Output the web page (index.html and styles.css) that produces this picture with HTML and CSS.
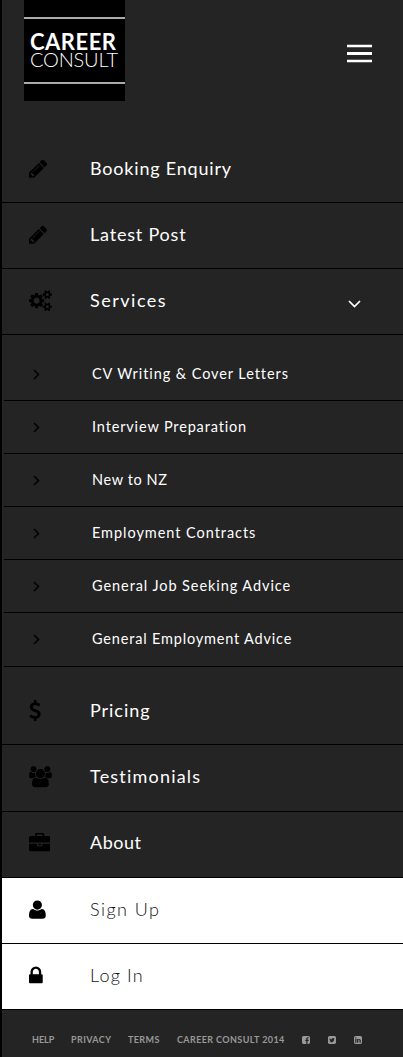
FILE: index.html
```html
<!DOCTYPE html>
<html lang="en">
<head>
<meta charset="utf-8">
<title>Career Consult</title>
<link rel="stylesheet" href="styles.css">
</head>
<body>
<svg class="defs" width="0" height="0">
  <defs>
    <path id="pencil" d="M491 1536l91-91-235-235-91 91v107h128v128h107zm523-928q0-22-22-22-10 0-17 7l-542 542q-7 7-7 17 0 22 22 22 10 0 17-7l542-542q7-7 7-17zm-54-192l416 416-832 832h-416v-416zm683 96q0 53-37 90l-166 166-416-416 166-165q36-38 90-38 53 0 91 38l235 234q37 39 37 91z"/>
    <path id="chevron" d="M1 1l4.5 4.5L1 10" fill="none" stroke="currentColor" stroke-width="1.5"/>
  </defs>
</svg>
<div class="menu">
  <header class="header">
    <div class="logo">
      <div class="logo-box">
        <span class="logo-career">CAREER</span>
        <span class="logo-consult">CONSULT</span>
      </div>
    </div>
    <svg class="burger" viewBox="0 0 25 19" fill="#fff"><path d="M0 .7h25v2.6H0zM0 8.1h25v2.8H0zM0 15.7h25v2.6H0z"/></svg>
  </header>
  <nav>
    <a class="row"><span class="icon"><svg viewBox="128 0 1792 1792"><use href="#pencil"/></svg></span><span class="label booking">Booking Enquiry</span></a>
    <a class="row"><span class="icon"><svg viewBox="128 0 1792 1792"><use href="#pencil"/></svg></span><span class="label latest">Latest Post</span></a>
    <a class="row"><span class="icon"><svg class="wide" viewBox="0 0 1920 1792"><path d="M896 896q0-106-75-181t-181-75-181 75-75 181 75 181 181 75 181-75 75-181zm768 512q0-52-38-90t-90-38-90 38-38 90q0 53 37.500 90.500t90.500 37.500 90.500-37.500 37.500-90.500zm0-1024q0-52-38-90t-90-38-90 38-38 90q0 53 37.500 90.500t90.500 37.500 90.500-37.500 37.500-90.500zm-384 421v185q0 10-7 19.500t-16 10.500l-155 24q-11 35-32 76 34 48 90 115 7 11 7 20 0 12-7 19-23 30-82.500 89.500t-78.500 59.500q-11 0-21-7l-115-90q-37 19-77 31-11 108-23 155-7 24-30 24h-186q-11 0-20-7.500t-10-17.500l-23-153q-34-10-75-31l-118 89q-7 7-20 7-11 0-21-8-144-133-144-160 0-9 7-19 10-14 41-53t47-61q-23-44-35-82l-152-24q-10-1-17-9.500t-7-19.500v-185q0-10 7-19.500t16-10.500l155-24q11-35 32-76-34-48-90-115-7-11-7-20 0-12 7-20 22-30 82-89t79-59q11 0 21 7l115 90q34-18 77-32 11-108 23-154 7-24 30-24h186q11 0 20 7.500t10 17.500l23 153q34 10 75 31l118-89q8-7 20-7 11 0 21 8 144 133 144 160 0 8-7 19-12 16-42 54t-45 60q23 48 34 82l152 23q10 2 17 10.500t7 19.500zm640 533v140q0 16-149 31-12 27-30 52 51 113 51 138 0 4-4 7-122 71-124 71-8 0-46-47t-52-68q-20 2-30 2t-30-2q-14 21-52 68t-46 47q-2 0-124-71-4-3-4-7 0-25 51-138-18-25-30-52-149-15-149-31v-140q0-16 149-31 13-29 30-52-51-113-51-138 0-4 4-7 4-2 35-20t59-34 30-16q8 0 46 46.500t52 67.500q20-2 30-2t30 2q51-71 92-112l6-2q4 0 124 70 4 3 4 7 0 25-51 138 17 23 30 52 149 15 149 31zm0-1024v140q0 16-149 31-12 27-30 52 51 113 51 138 0 4-4 7-122 71-124 71-8 0-46-47t-52-68q-20 2-30 2t-30-2q-14 21-52 68t-46 47q-2 0-124-71-4-3-4-7 0-25 51-138-18-25-30-52-149-15-149-31v-140q0-16 149-31 13-29 30-52-51-113-51-138 0-4 4-7 4-2 35-20t59-34 30-16q8 0 46 46.500t52 67.500q20-2 30-2t30 2q51-71 92-112l6-2q4 0 124 70 4 3 4 7 0 25-51 138 17 23 30 52 149 15 149 31z"/></svg></span><span class="label services">Services</span><svg class="caret" viewBox="0 0 13 8"><path d="M1 1l5.500 5.500L12 1" fill="none" stroke="#fff" stroke-width="1.7"/></svg></a>
    <div class="submenu">
      <a class="sub"><svg class="chev" viewBox="0 0 7 11"><use href="#chevron"/></svg><span class="cv">CV Writing &amp; Cover Letters</span></a>
      <a class="sub"><svg class="chev" viewBox="0 0 7 11"><use href="#chevron"/></svg><span class="interview">Interview Preparation</span></a>
      <a class="sub"><svg class="chev" viewBox="0 0 7 11"><use href="#chevron"/></svg><span class="new">New to NZ</span></a>
      <a class="sub"><svg class="chev" viewBox="0 0 7 11"><use href="#chevron"/></svg><span class="contracts">Employment Contracts</span></a>
      <a class="sub"><svg class="chev" viewBox="0 0 7 11"><use href="#chevron"/></svg><span class="seeking">General Job Seeking Advice</span></a>
      <a class="sub last"><svg class="chev" viewBox="0 0 7 11"><use href="#chevron"/></svg><span class="employment">General Employment Advice</span></a>
    </div>
    <a class="row after-sub"><span class="icon"><svg viewBox="384 0 1792 1792"><path d="M1362 1185q0 153-99.500 263.500t-258.500 136.500v175q0 14-9 23t-23 9h-135q-13 0-22.500-9.500t-9.500-22.500v-175q-66-9-127.500-31t-101.500-44.500-74-48-46.500-37.500-17.500-18q-17-21-2-41l103-135q7-10 23-12 15-2 24 9l2 2q113 99 243 125 37 8 74 8 81 0 142.500-43t61.500-122q0-28-15-53t-33.500-42-58.500-37.500-66-32-80-32.500q-39-16-61.500-25t-61.500-26.500-62.500-31-56.500-35.500-53.500-42.500-43.500-49-35.500-58-21-66.500-8.500-78q0-138 98-242t255-134v-180q0-13 9.500-22.500t22.500-9.500h135q14 0 23 9t9 23v176q57 6 110.500 23t87 33.500 63.500 37.500 39 29 15 14q17 18 5 38l-81 146q-8 15-23 16-14 3-27-7-3-3-14.500-12t-39-26.500-58.500-32-74.500-26-85.500-11.500q-95 0-155 43t-60 111q0 26 8.500 48t29.500 41.500 39.500 33 56 31 60.500 27 70 27.500q53 20 81 31.500t76 35 75.500 42.500 62 50 53 63.500 31.500 76.500 13 94z"/></svg></span><span class="label pricing">Pricing</span></a>
    <a class="row tall"><span class="icon"><svg class="wide" viewBox="0 0 1920 1792"><path d="M593 896q-162 5-265 128h-134q-82 0-138-40.500t-56-118.500q0-353 124-353 6 0 43.500 21t97.500 42.500 119 21.500q67 0 133-23-5 37-5 66 0 139 81 256zm1071 637q0 120-73 189.500t-194 69.500h-874q-121 0-194-69.500t-73-189.500q0-53 3.500-103.500t14-109 26.500-108.500 43-97.500 62-81 85.500-53.500 111.500-20q10 0 43 21.500t73 48 107 48 135 21.500 135-21.500 107-48 73-48 43-21.500q61 0 111.500 20t85.500 53.500 62 81 43 97.500 26.500 108.500 14 109 3.500 103.500zm-1024-1277q0 106-75 181t-181 75-181-75-75-181 75-181 181-75 181 75 75 181zm704 384q0 159-112.500 271.500t-271.500 112.500-271.500-112.500-112.500-271.500 112.500-271.500 271.500-112.500 271.500 112.500 112.500 271.500zm576 225q0 78-56 118.500t-138 40.500h-134q-103-123-265-128 81-117 81-256 0-29-5-66 66 23 133 23 59 0 119-21.500t97.500-42.500 43.500-21q124 0 124 353zm-128-609q0 106-75 181t-181 75-181-75-75-181 75-181 181-75 181 75 75 181z"/></svg></span><span class="label testimonials">Testimonials</span></a>
    <a class="row"><span class="icon"><svg viewBox="0 0 1792 1792"><path d="M640 256h512v-128h-512v128zm1152 640v480q0 66-47 113t-113 47h-1472q-66 0-113-47t-47-113v-480h672v160q0 26 19 45t45 19h320q26 0 45-19t19-45v-160h672zm-768 0v128h-256v-128h256zm768-480v384h-1792v-384q0-66 47-113t113-47h352v-160q0-40 28-68t68-28h576q40 0 68 28t28 68v160h352q66 0 113 47t47 113z"/></svg></span><span class="label about">About</span></a>
    <a class="row light"><span class="icon"><svg viewBox="192 0 1792 1792"><path d="M1600 1405q0 120-73 189.500t-194 69.500h-874q-121 0-194-69.500t-73-189.500q0-53 3.500-103.500t14-109 26.500-108.500 43-97.500 62-81 85.500-53.500 111.500-20q9 0 42 21.500t74.500 48 108 48 133.500 21.500 133.500-21.500 108-48 74.500-48 42-21.500q61 0 111.500 20t85.500 53.500 62 81 43 97.500 26.500 108.500 14 109 3.500 103.500zm-320-893q0 159-112.500 271.500t-271.500 112.500-271.500-112.500-112.500-271.500 112.500-271.500 271.500-112.500 271.500 112.500 112.500 271.500z"/></svg></span><span class="label signup">Sign Up</span></a>
    <a class="row light"><span class="icon"><svg viewBox="320 0 1792 1792"><path d="M640 768h512v-192q0-106-75-181t-181-75-181 75-75 181v192zm832 96v576q0 40-28 68t-68 28h-960q-40 0-68-28t-28-68v-576q0-40 28-68t68-28h32v-192q0-184 132-316t316-132 316 132 132 316v192h32q40 0 68 28t28 68z"/></svg></span><span class="label login">Log In</span></a>
  </nav>
  <footer class="footer">
    <a class="help">HELP</a><a class="privacy">PRIVACY</a><a class="terms">TERMS</a><a class="copy">CAREER CONSULT 2014</a>
    <svg viewBox="128 128 1536 1536"><path d="M1376 128q119 0 203.500 84.500t84.500 203.500v960q0 119-84.500 203.500t-203.500 84.500h-188v-595h199l30-232h-229v-148q0-56 23.500-84t91.500-28l122-1v-207q-63-9-178-9-136 0-217.500 80t-81.500 226v171h-200v232h200v595h-532q-119 0-203.500-84.500t-84.500-203.500v-960q0-119 84.500-203.500t203.500-84.500h960z"/></svg>
    <svg viewBox="128 128 1536 1536"><path d="M1408 610q-56 25-121 34 68-40 93-117-65 38-134 51-61-66-153-66-87 0-148.500 61.500t-61.500 148.500q0 29 5 48-129-7-242-65t-192-155q-29 50-29 106 0 114 91 175-47-1-100-26v2q0 75 50 133.500t123 72.500q-29 8-51 8-13 0-39-4 21 63 74.500 104t121.500 42q-116 90-261 90-26 0-50-3 148 94 322 94 112 0 210-35.500t168-95 120.500-137 75-162 24.500-168.500q0-18-1-27 63-45 105-109zm256-194v960q0 119-84.500 203.500t-203.500 84.500h-960q-119 0-203.500-84.500t-84.500-203.500v-960q0-119 84.500-203.500t203.500-84.500h960q119 0 203.500 84.500t84.500 203.500z"/></svg>
    <svg viewBox="128 128 1536 1536"><path d="M365 1414h231v-694h-231v694zm246-908q-1-52-36-86t-93-34-94.500 34-36.500 86q0 51 35.500 85.500t92.500 34.500h1q59 0 95-34.500t36-85.500zm585 908h231v-398q0-154-73-233t-193-79q-136 0-209 117h2v-101h-231q3 66 0 694h231v-388q0-38 7-56 15-35 45-59.500t74-24.500q116 0 116 157v371zm468-998v960q0 119-84.500 203.500t-203.500 84.500h-960q-119 0-203.500-84.500t-84.500-203.500v-960q0-119 84.500-203.500t203.500-84.500h960q119 0 203.500 84.500t84.500 203.500z"/></svg>
  </footer>
</div>
</body>
</html>
```

FILE: styles.css
```css
* { box-sizing: border-box; }
body { margin: 0; background: #242424; font-family: Lato, "Open Sans", sans-serif; }
.defs { display: none; }
.menu { width: 403px; height: 1057px; border-left: 2px solid #000; background: #242424; overflow: hidden; }
.header { height: 137px; padding: 0 31px 0 22px; display: flex; justify-content: space-between; align-items: flex-start; }
.logo { width: 101px; height: 101px; background: #000; color: #fff; padding-top: 17px; }
.logo-box { height: 67px; border-top: 2px solid #aaa; border-bottom: 2px solid #aaa; padding: 13px 0 0 6px; display: flex; flex-direction: column; white-space: nowrap; }
.logo-career { font-size: 22px; line-height: 19px; font-weight: 700; letter-spacing: .5px; }
.logo-consult { font-size: 20px; line-height: 17px; font-weight: 300; letter-spacing: -.2px; }
.burger { width: 25px; height: 19px; margin-top: 44px; }

.row { height: 66px; display: flex; align-items: center; border-bottom: 1px solid #000; padding: 0 42px 0 27px; color: #fff; }
.icon { width: 61px; height: 21.330px; margin-bottom: 2px; color: #000; }
.icon svg { display: block; width: 21.330px; height: 21.330px; fill: #000; }
.icon .wide { width: 22.860px; }
.label { font-size: 18px; line-height: 24px; margin-bottom: 4px; letter-spacing: .8px; white-space: nowrap; }
.services { letter-spacing: 1.500px; }
.pricing { letter-spacing: .950px; }
.testimonials { letter-spacing: 1.200px; }
.about { letter-spacing: .500px; margin-bottom: 5px; }
.signup { letter-spacing: 1.450px; }
.login { letter-spacing: 1.200px; }
.caret { width: 13px; height: 8px; margin: 5px 0 0 auto; }
.after-sub { height: 78px; padding-top: 12px; }
.tall { height: 67px; }
.light { background: #fff; color: #111; font-weight: 300; }

.submenu { padding-top: 13px; margin-left: 2px; }
.sub { height: 53px; display: flex; align-items: center; border-bottom: 1px solid #000; padding-left: 29px; color: #fff; font-size: 14.500px; line-height: 20px; white-space: nowrap; }
.last { height: 54px; padding-bottom: 1px; }
.chev { width: 7px; height: 11px; margin-right: 52px; color: #000; }
.cv { letter-spacing: .920px; }
.interview { letter-spacing: .850px; }
.new { letter-spacing: .600px; }
.contracts { letter-spacing: .950px; }
.seeking { letter-spacing: .930px; }
.employment { letter-spacing: .820px; }

.footer { height: 47px; padding: 13px 0 0 30px; display: flex; align-items: center; color: #999; font-size: 9px; line-height: 12px; white-space: nowrap; font-weight: 700; letter-spacing: .4px; }
.footer a { flex: none; }
.footer svg { width: 8px; height: 8px; fill: #999; margin-right: 18px; }
.help { width: 39px; letter-spacing: 0; }
.privacy { width: 57px; }
.terms { width: 49px; }
.copy { width: 124.500px; }
```
